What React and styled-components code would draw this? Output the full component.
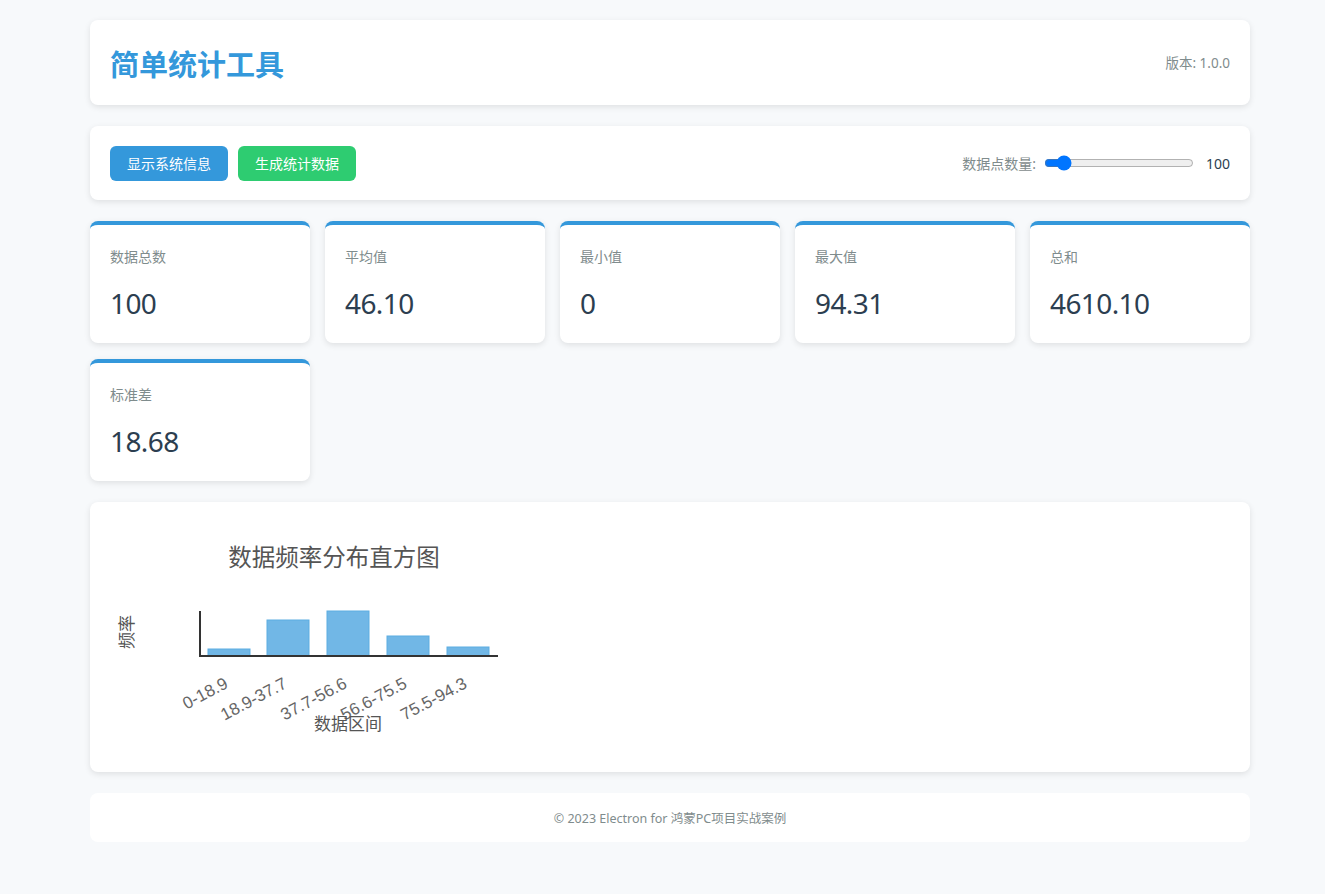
import React from 'react'
import styled, { createGlobalStyle } from 'styled-components'

const GlobalStyle = createGlobalStyle`
  body {
    margin: 0;
    background: #f7f9fb;
    font-family: "Noto Sans", "Noto Sans CJK SC", sans-serif;
    color: #2c3e50;
  }
`

const Page = styled.div`
  width: 1160px;
  padding: 20px 0 51px 90px;
  display: flex;
  flex-direction: column;
  gap: 21px;
`

const Card = styled.div`
  background: #fff;
  border-radius: 8px;
  box-shadow: 0 2px 6px rgba(0,0,0,0.1);
`

const Header = styled(Card)`
  height: 85px;
  padding: 0 20px;
  display: flex;
  align-items: center;
  justify-content: space-between;
  box-sizing: border-box;
`

const Title = styled.h1`
  margin: 0;
  font-size: 29px;
  font-weight: 700;
  color: #3498db;
  font-family: "Noto Sans CJK SC", sans-serif;
`

const Version = styled.div`
  font-size: 13.5px;
  color: #7f8c8d;
  margin-top: -2px;
`

const Controls = styled(Card)`
  height: 74px;
  padding: 0 20px;
  display: flex;
  align-items: center;
  justify-content: space-between;
  box-sizing: border-box;
`

const ButtonRow = styled.div`
  display: flex;
  gap: 10px;
`

const Button = styled.button`
  height: 35px;
  padding: 0 17px;
  border: none;
  border-radius: 6px;
  background: ${p => p.$color};
  color: #fff;
  font-size: 14px;
  font-family: "Noto Sans CJK SC", sans-serif;
  cursor: pointer;
`

const SliderRow = styled.div`
  display: flex;
  align-items: center;
  gap: 8px;
  font-size: 14px;
  color: #7f8c8d;
`

const Range = styled.input`
  width: 150px;
  margin: 0;
  accent-color: #0075ff;
`

const Count = styled.span`
  color: #2c3e50;
  font-size: 14px;
  margin-left: 4px;
`

const StatsGrid = styled.div`
  display: grid;
  grid-template-columns: repeat(5, 220px);
  gap: 16px 15px;
`

const StatCard = styled(Card)`
  height: 122px;
  border-top: 4px solid #3498db;
  padding: 22px 20px 0;
  box-sizing: border-box;
`

const StatLabel = styled.div`
  font-size: 14px;
  color: #7f8c8d;
  font-family: "Noto Sans CJK SC", sans-serif;
  line-height: 18px;
`

const StatValue = styled.div`
  margin-top: 19px;
  font-size: 28px;
  line-height: 38px;
  letter-spacing: -0.6px;
  color: #2c3e50;
`

const ChartCard = styled(Card)`
  height: 270px;
  padding: 20px;
  box-sizing: border-box;
`

const Footer = styled(Card)`
  height: 49px;
  display: flex;
  align-items: center;
  justify-content: center;
  font-size: 12.5px;
  color: #7f8c8d;
  box-shadow: none;
`

const stats = [
  ['数据总数', '100'],
  ['平均值', '46.10'],
  ['最小值', '0'],
  ['最大值', '94.31'],
  ['总和', '4610.10'],
  ['标准差', '18.68'],
]

const bars = [
  { x: 98, top: 127, label: '0-18.9' },
  { x: 157, top: 98, label: '18.9-37.7' },
  { x: 217, top: 89, label: '37.7-56.6' },
  { x: 277, top: 114, label: '56.6-75.5' },
  { x: 337, top: 125, label: '75.5-94.3' },
]

function Histogram() {
  const font = '"Liberation Sans", "Noto Sans CJK SC", sans-serif'
  return (
    <svg width="420" height="230" style={{ display: 'block' }}>
      <text x="224" y="44" textAnchor="middle" fontSize="23.5" fill="#555" fontFamily={font}>数据频率分布直方图</text>
      <text transform="translate(23 110) rotate(-90)" textAnchor="middle" fontSize="17" fill="#555" fontFamily={font}>频率</text>
      {bars.map(b => (
        <rect key={b.label} x={b.x} y={b.top} width="42" height={134 - b.top} fill="rgba(52,152,219,0.7)" stroke="#5dade2" strokeWidth="1" />
      ))}
      <line x1="90" y1="89" x2="90" y2="135" stroke="#333" strokeWidth="2" />
      <line x1="89" y1="134" x2="388" y2="134" stroke="#333" strokeWidth="2" />
      {bars.map(b => (
        <text key={b.label} transform={`translate(${b.x + 21} 165) rotate(-28)`} textAnchor="end" fontSize="17" fill="#666" fontFamily={font}>{b.label}</text>
      ))}
      <text x="238" y="208" textAnchor="middle" fontSize="17" fill="#555" fontFamily={font}>数据区间</text>
    </svg>
  )
}

export default function App() {
  return (
    <>
      <GlobalStyle />
      <Page>
        <Header>
          <Title>简单统计工具</Title>
          <Version>版本: 1.0.0</Version>
        </Header>
        <Controls>
          <ButtonRow>
            <Button $color="#3498db">显示系统信息</Button>
            <Button $color="#2ecc71">生成统计数据</Button>
          </ButtonRow>
          <SliderRow>
            数据点数量:
            <Range type="range" min="10" max="1000" defaultValue="100" />
            <Count>100</Count>
          </SliderRow>
        </Controls>
        <StatsGrid>
          {stats.map(([label, value]) => (
            <StatCard key={label}>
              <StatLabel>{label}</StatLabel>
              <StatValue>{value}</StatValue>
            </StatCard>
          ))}
        </StatsGrid>
        <ChartCard>
          <Histogram />
        </ChartCard>
        <Footer>© 2023 Electron for 鸿蒙PC项目实战案例</Footer>
      </Page>
    </>
  )
}
